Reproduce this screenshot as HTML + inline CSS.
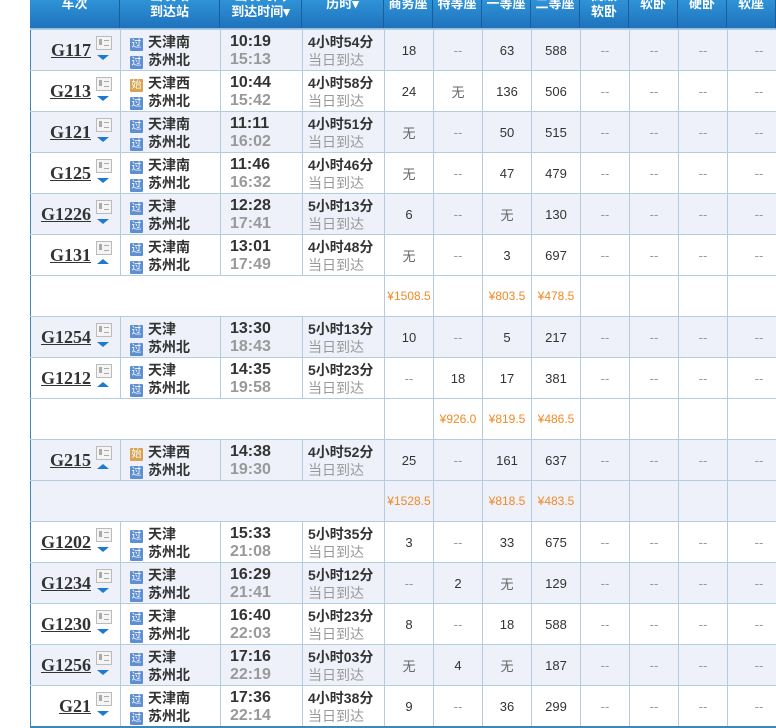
<!DOCTYPE html><html><head><meta charset="utf-8"><style>
body{margin:0;width:776px;height:728px;overflow:hidden;background:#fff;font-family:"Liberation Sans","Noto Sans CJK SC",sans-serif}
.hd{position:absolute;left:30px;top:0;width:760px;height:28px;background:linear-gradient(#2f93d8,#1e72bc);border-bottom:1px solid #8fc0e4;overflow:hidden}
.hd div{position:absolute;color:#fff;font-weight:bold;font-size:13px;text-align:center;line-height:16px;height:45px;border-right:1px solid #1a5f9c}
.hd div.o{top:-4px}.hd div.t{top:-12px}
table{position:absolute;left:30px;top:29px;border-collapse:collapse;table-layout:fixed;width:760px}
td{border:1px solid #b4cddd;height:40px;padding:0;text-align:center;font-size:13px;color:#333;position:relative}
tr.a td{background:#eef1f9}
td.f{border-left:1px solid #3e87b8}
tr.last td{border-bottom:2px solid #3e87b8}
td.n{color:#999}
td.w{color:#666;font-size:13px}
td.p{color:#f08a24;font-size:12px}
.num{position:absolute;right:29px;top:10px;font:bold 18px "Liberation Serif",serif;color:#333;text-decoration:underline}
.ic{position:absolute;left:65px;top:6px;width:14px;height:12px;border:1px solid #bbb;background:#f4f4f4}
.ic:before{content:"";position:absolute;left:2px;top:2px;width:3px;height:6px;background:#aaa}
.ic:after{content:"";position:absolute;left:7px;top:3px;width:5px;height:4px;border-top:1px solid #aaa;border-bottom:1px solid #aaa}
.dn{position:absolute;left:66px;top:25px;width:0;height:0;border-left:6px solid transparent;border-right:6px solid transparent;border-top:5px solid #1e7ad0}
.up{position:absolute;left:66px;top:24px;width:0;height:0;border-left:6px solid transparent;border-right:6px solid transparent;border-bottom:5px solid #1e7ad0}
.st{text-align:left;padding-left:9px;font-weight:bold;font-size:14px;color:#333}
.st p,.tm p,.du p{margin:0;height:18px;line-height:18px}
.st p:first-child,.tm p:first-child,.du p:first-child{margin-top:2px}
.g,.s{display:inline-block;width:13px;height:13px;line-height:13px;font-size:10px;color:#fff;background:#5e8fd2;text-align:center;margin-right:5px;vertical-align:0px;font-weight:normal;border-radius:1px}
.s{background:#d8a353}
.tm{text-align:left;padding-left:9px;font-weight:bold;font-size:16px}
.tm p+p{color:#999}
.du{text-align:left;padding-left:5px;font-size:14px}
.du p:first-child{font-weight:bold}
.du p+p{color:#999}
</style></head><body>
<div class="hd">
<div class="o" style="left:0;width:89px">车次</div>
<div class="t" style="left:90px;width:99px">出发站<br>到达站</div>
<div class="t" style="left:190px;width:81px">出发时间<br>到达时间▾</div>
<div class="o" style="left:272px;width:81px">历时▾</div>
<div class="o" style="left:354px;width:48px">商务座</div>
<div class="o" style="left:403px;width:48px">特等座</div>
<div class="o" style="left:452px;width:48px">一等座</div>
<div class="o" style="left:501px;width:48px">二等座</div>
<div class="t" style="left:550px;width:48px">高级<br>软卧</div>
<div class="o" style="left:599px;width:48px">软卧</div>
<div class="o" style="left:648px;width:48px">硬卧</div>
<div class="o" style="left:697px;width:48px">软座</div>
</div>
<table>
<colgroup><col style="width:90px"><col style="width:100px"><col style="width:82px"><col style="width:82px"><col style="width:49px"><col style="width:49px"><col style="width:49px"><col style="width:49px"><col style="width:49px"><col style="width:49px"><col style="width:49px"><col style="width:63px"></colgroup>
<tr class="a"><td class="f"><span class="num">G117</span><i class="ic"></i><i class="dn"></i></td><td class="st"><p><b class="g">过</b>天津南</p><p><b class="g">过</b>苏州北</p></td><td class="tm"><p>10:19</p><p>15:13</p></td><td class="du"><p>4小时54分</p><p>当日到达</p></td><td>18</td><td class="n">--</td><td>63</td><td>588</td><td class="n">--</td><td class="n">--</td><td class="n">--</td><td class="n">--</td></tr>
<tr><td class="f"><span class="num">G213</span><i class="ic"></i><i class="dn"></i></td><td class="st"><p><b class="s">始</b>天津西</p><p><b class="g">过</b>苏州北</p></td><td class="tm"><p>10:44</p><p>15:42</p></td><td class="du"><p>4小时58分</p><p>当日到达</p></td><td>24</td><td class="w">无</td><td>136</td><td>506</td><td class="n">--</td><td class="n">--</td><td class="n">--</td><td class="n">--</td></tr>
<tr class="a"><td class="f"><span class="num">G121</span><i class="ic"></i><i class="dn"></i></td><td class="st"><p><b class="g">过</b>天津南</p><p><b class="g">过</b>苏州北</p></td><td class="tm"><p>11:11</p><p>16:02</p></td><td class="du"><p>4小时51分</p><p>当日到达</p></td><td class="w">无</td><td class="n">--</td><td>50</td><td>515</td><td class="n">--</td><td class="n">--</td><td class="n">--</td><td class="n">--</td></tr>
<tr><td class="f"><span class="num">G125</span><i class="ic"></i><i class="dn"></i></td><td class="st"><p><b class="g">过</b>天津南</p><p><b class="g">过</b>苏州北</p></td><td class="tm"><p>11:46</p><p>16:32</p></td><td class="du"><p>4小时46分</p><p>当日到达</p></td><td class="w">无</td><td class="n">--</td><td>47</td><td>479</td><td class="n">--</td><td class="n">--</td><td class="n">--</td><td class="n">--</td></tr>
<tr class="a"><td class="f"><span class="num">G1226</span><i class="ic"></i><i class="dn"></i></td><td class="st"><p><b class="g">过</b>天津</p><p><b class="g">过</b>苏州北</p></td><td class="tm"><p>12:28</p><p>17:41</p></td><td class="du"><p>5小时13分</p><p>当日到达</p></td><td>6</td><td class="n">--</td><td class="w">无</td><td>130</td><td class="n">--</td><td class="n">--</td><td class="n">--</td><td class="n">--</td></tr>
<tr><td class="f"><span class="num">G131</span><i class="ic"></i><i class="up"></i></td><td class="st"><p><b class="g">过</b>天津南</p><p><b class="g">过</b>苏州北</p></td><td class="tm"><p>13:01</p><p>17:49</p></td><td class="du"><p>4小时48分</p><p>当日到达</p></td><td class="w">无</td><td class="n">--</td><td>3</td><td>697</td><td class="n">--</td><td class="n">--</td><td class="n">--</td><td class="n">--</td></tr>
<tr><td class="f" colspan="4"></td><td class="p">¥1508.5</td><td></td><td class="p">¥803.5</td><td class="p">¥478.5</td><td></td><td></td><td></td><td></td></tr>
<tr class="a"><td class="f"><span class="num">G1254</span><i class="ic"></i><i class="dn"></i></td><td class="st"><p><b class="g">过</b>天津</p><p><b class="g">过</b>苏州北</p></td><td class="tm"><p>13:30</p><p>18:43</p></td><td class="du"><p>5小时13分</p><p>当日到达</p></td><td>10</td><td class="n">--</td><td>5</td><td>217</td><td class="n">--</td><td class="n">--</td><td class="n">--</td><td class="n">--</td></tr>
<tr><td class="f"><span class="num">G1212</span><i class="ic"></i><i class="up"></i></td><td class="st"><p><b class="g">过</b>天津</p><p><b class="g">过</b>苏州北</p></td><td class="tm"><p>14:35</p><p>19:58</p></td><td class="du"><p>5小时23分</p><p>当日到达</p></td><td class="n">--</td><td>18</td><td>17</td><td>381</td><td class="n">--</td><td class="n">--</td><td class="n">--</td><td class="n">--</td></tr>
<tr><td class="f" colspan="4"></td><td></td><td class="p">¥926.0</td><td class="p">¥819.5</td><td class="p">¥486.5</td><td></td><td></td><td></td><td></td></tr>
<tr class="a"><td class="f"><span class="num">G215</span><i class="ic"></i><i class="up"></i></td><td class="st"><p><b class="s">始</b>天津西</p><p><b class="g">过</b>苏州北</p></td><td class="tm"><p>14:38</p><p>19:30</p></td><td class="du"><p>4小时52分</p><p>当日到达</p></td><td>25</td><td class="n">--</td><td>161</td><td>637</td><td class="n">--</td><td class="n">--</td><td class="n">--</td><td class="n">--</td></tr>
<tr class="a"><td class="f" colspan="4"></td><td class="p">¥1528.5</td><td></td><td class="p">¥818.5</td><td class="p">¥483.5</td><td></td><td></td><td></td><td></td></tr>
<tr><td class="f"><span class="num">G1202</span><i class="ic"></i><i class="dn"></i></td><td class="st"><p><b class="g">过</b>天津</p><p><b class="g">过</b>苏州北</p></td><td class="tm"><p>15:33</p><p>21:08</p></td><td class="du"><p>5小时35分</p><p>当日到达</p></td><td>3</td><td class="n">--</td><td>33</td><td>675</td><td class="n">--</td><td class="n">--</td><td class="n">--</td><td class="n">--</td></tr>
<tr class="a"><td class="f"><span class="num">G1234</span><i class="ic"></i><i class="dn"></i></td><td class="st"><p><b class="g">过</b>天津</p><p><b class="g">过</b>苏州北</p></td><td class="tm"><p>16:29</p><p>21:41</p></td><td class="du"><p>5小时12分</p><p>当日到达</p></td><td class="n">--</td><td>2</td><td class="w">无</td><td>129</td><td class="n">--</td><td class="n">--</td><td class="n">--</td><td class="n">--</td></tr>
<tr><td class="f"><span class="num">G1230</span><i class="ic"></i><i class="dn"></i></td><td class="st"><p><b class="g">过</b>天津</p><p><b class="g">过</b>苏州北</p></td><td class="tm"><p>16:40</p><p>22:03</p></td><td class="du"><p>5小时23分</p><p>当日到达</p></td><td>8</td><td class="n">--</td><td>18</td><td>588</td><td class="n">--</td><td class="n">--</td><td class="n">--</td><td class="n">--</td></tr>
<tr class="a"><td class="f"><span class="num">G1256</span><i class="ic"></i><i class="dn"></i></td><td class="st"><p><b class="g">过</b>天津</p><p><b class="g">过</b>苏州北</p></td><td class="tm"><p>17:16</p><p>22:19</p></td><td class="du"><p>5小时03分</p><p>当日到达</p></td><td class="w">无</td><td>4</td><td class="w">无</td><td>187</td><td class="n">--</td><td class="n">--</td><td class="n">--</td><td class="n">--</td></tr>
<tr class="last"><td class="f"><span class="num">G21</span><i class="ic"></i><i class="dn"></i></td><td class="st"><p><b class="g">过</b>天津南</p><p><b class="g">过</b>苏州北</p></td><td class="tm"><p>17:36</p><p>22:14</p></td><td class="du"><p>4小时38分</p><p>当日到达</p></td><td>9</td><td class="n">--</td><td>36</td><td>299</td><td class="n">--</td><td class="n">--</td><td class="n">--</td><td class="n">--</td></tr>
</table>
</body></html>
